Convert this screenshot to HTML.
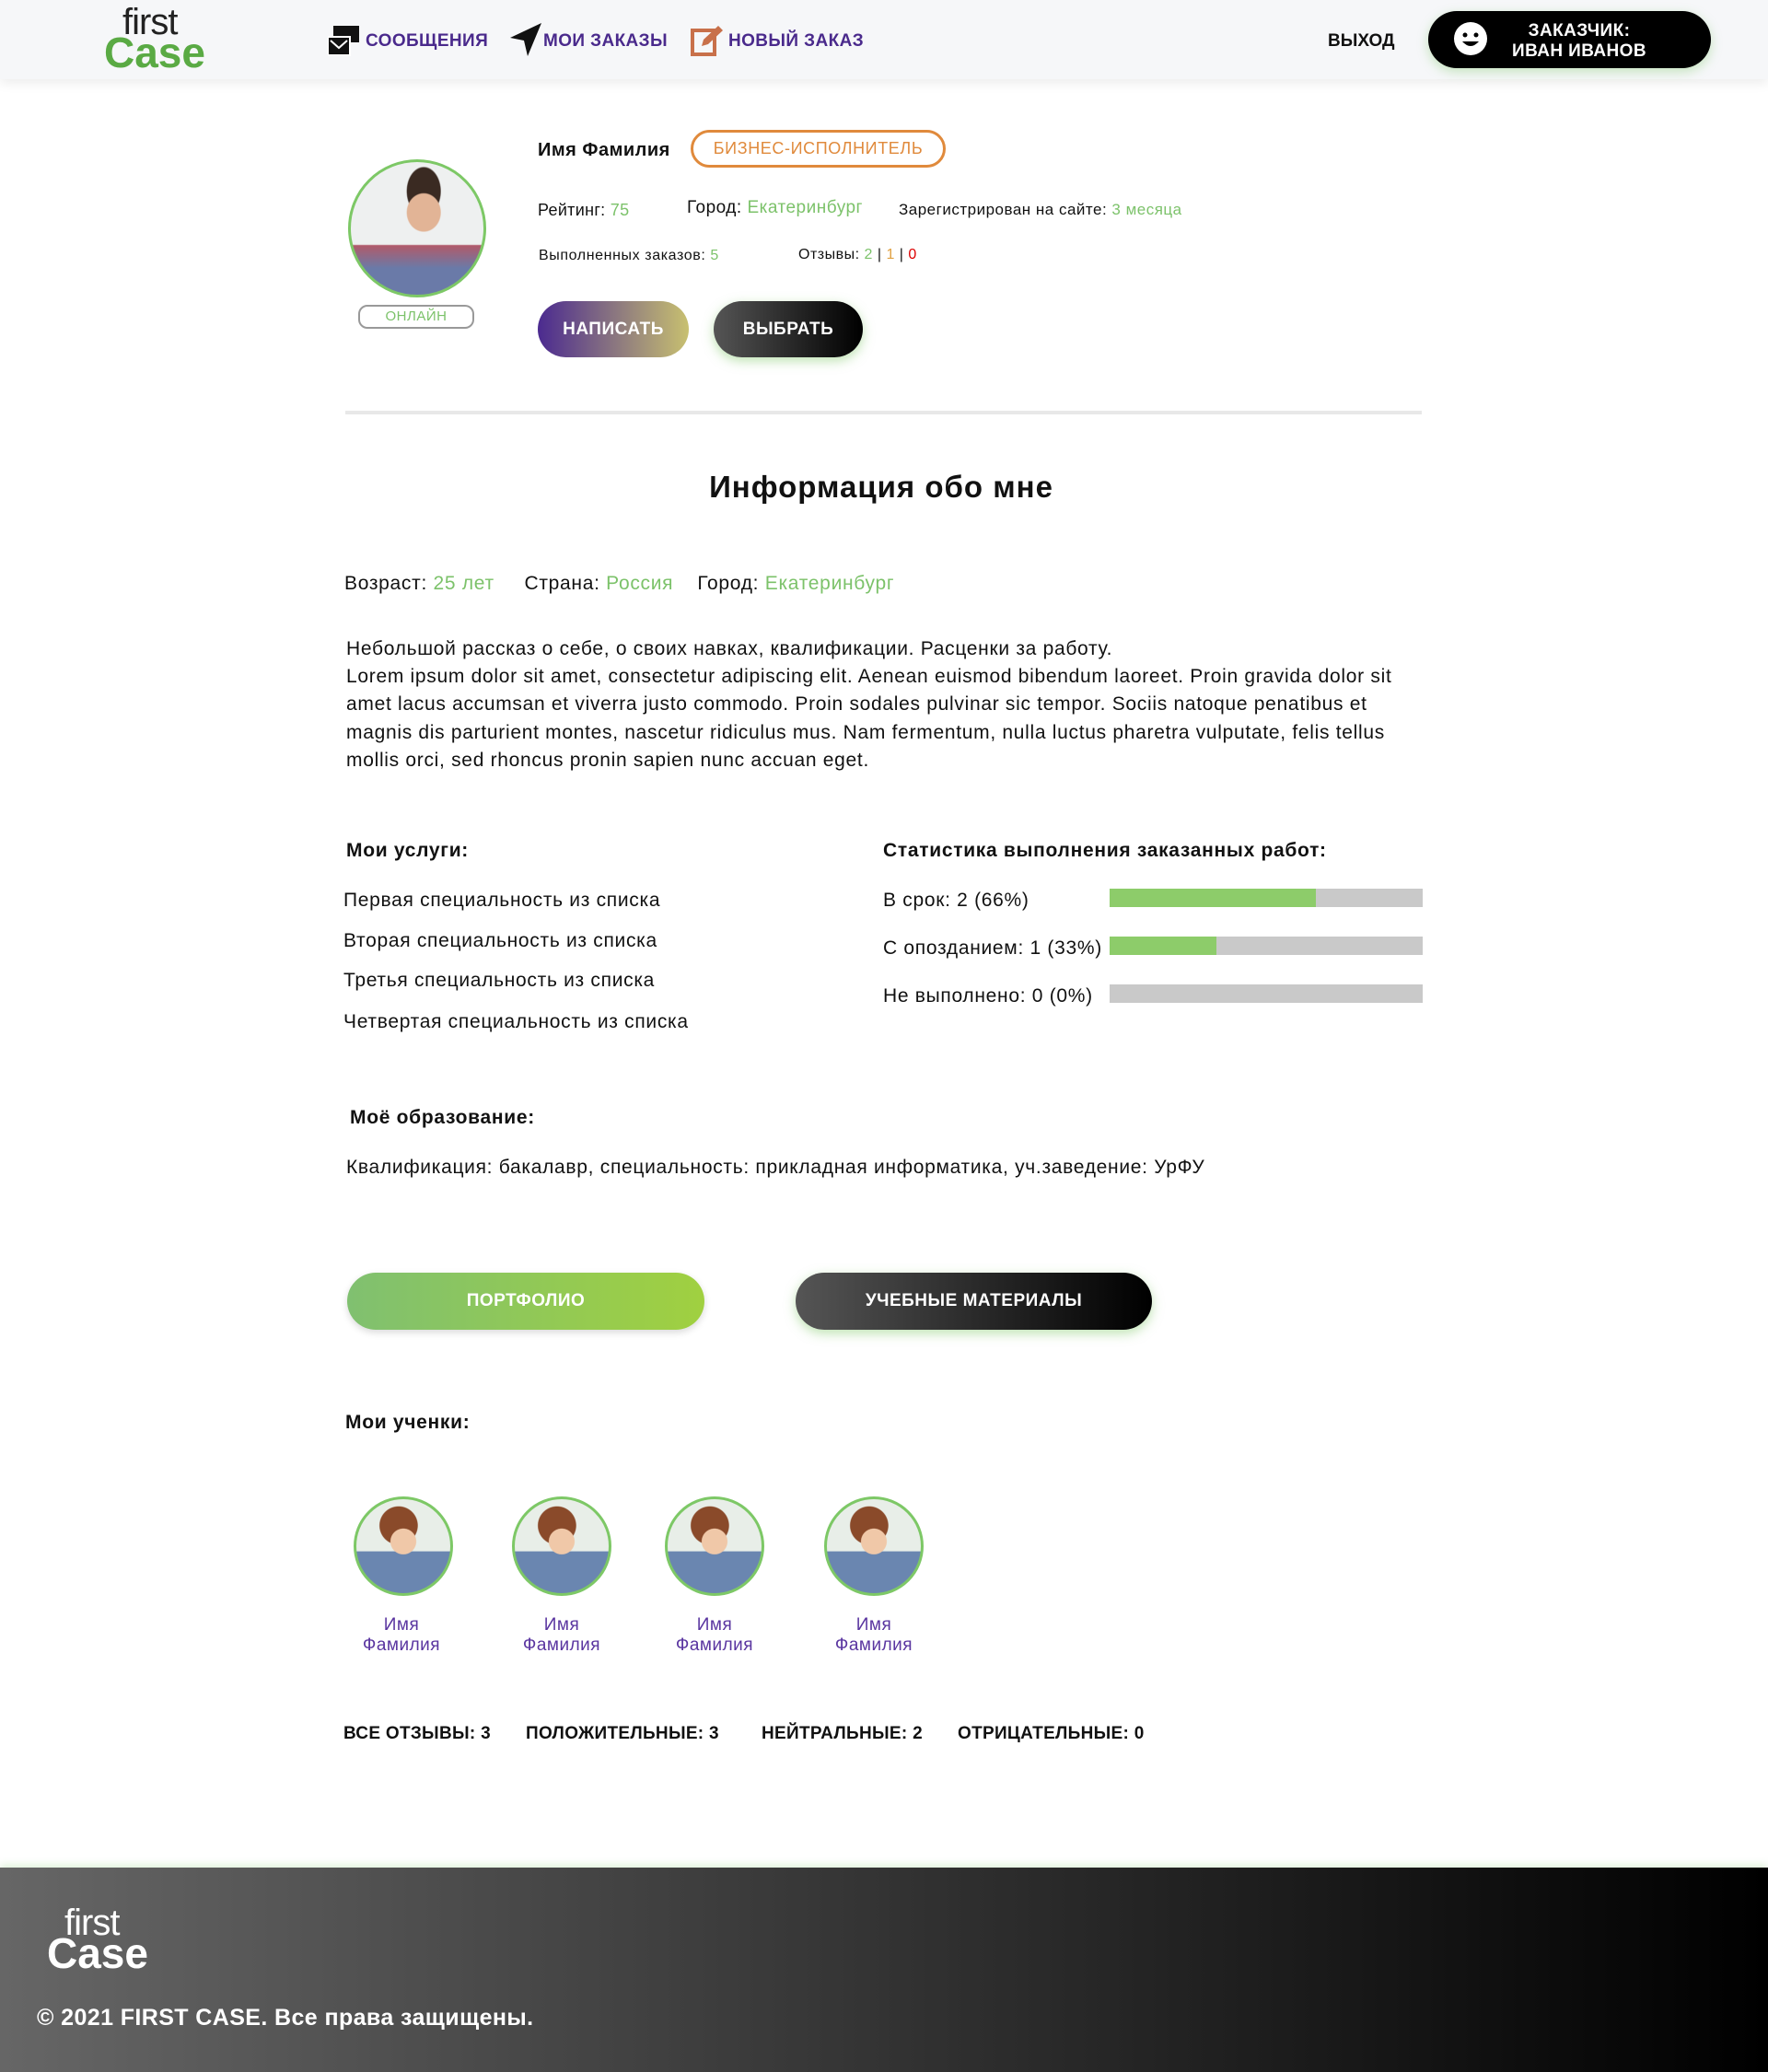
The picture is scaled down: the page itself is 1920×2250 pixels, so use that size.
<!DOCTYPE html>
<html><head><meta charset="utf-8"><style>
*{margin:0;padding:0;box-sizing:border-box}
body{width:1920px;height:2250px;position:relative;background:#fff;font-family:"Liberation Sans",sans-serif;color:#111;overflow:hidden}
.a{position:absolute;white-space:nowrap}
.g{color:#7cc26a}
.hdr{position:absolute;left:0;top:0;width:1920px;height:86px;background:#f6f7f9;box-shadow:0 4px 12px rgba(0,0,0,.08)}
.nav{font-size:19px;font-weight:bold;color:#4a2a8c;top:34px;letter-spacing:.4px}
.btn{position:absolute;border-radius:31px;color:#fff;font-weight:bold;display:flex;align-items:center;justify-content:center;font-size:19px;letter-spacing:.5px}
.bar{position:absolute;left:1205px;width:340px;height:20px;background:#c9c9c9}
.bar i{display:block;height:100%;background:#8dcc6a}
.av{position:absolute;width:108px;height:108px;border-radius:50%;border:3px solid #7dc866;background:radial-gradient(circle at 50% 45%,#f0c8a8 0 18%,transparent 19%),radial-gradient(circle at 45% 28%,#8a4a2a 0 22%,transparent 23%),linear-gradient(180deg,#e8eee8 0 55%,#6a86b0 56%)}
.nm{position:absolute;width:140px;text-align:center;font-size:19px;color:#5a35a0;line-height:22px;letter-spacing:.5px}
.txt{font-size:21px;letter-spacing:.7px}
</style></head><body>
<div class="hdr"></div>
<div class="a" style="left:133px;top:2px;font-size:40px;color:#222;letter-spacing:-1px">first</div>
<div class="a" style="left:113px;top:30px;font-size:46px;font-weight:bold;color:#5aaa44">Case</div>
<svg class="a" style="left:356px;top:28px" width="36" height="34" viewBox="0 0 36 34"><rect x="6" y="0" width="28" height="18" fill="#111"/><rect x="0" y="12" width="24" height="20" fill="#111" stroke="#fff" stroke-width="2"/><path d="M3 16 L12 24 L21 16" stroke="#fff" stroke-width="2" fill="none"/></svg>
<div class="a nav" style="left:397px">СООБЩЕНИЯ</div>
<svg class="a" style="left:553px;top:24px" width="36" height="38" viewBox="0 0 36 38"><path d="M35 1 L1 17 L16 20 L20 37 Z" fill="#111"/></svg>
<div class="a nav" style="left:590px">МОИ ЗАКАЗЫ</div>
<svg class="a" style="left:750px;top:26px" width="36" height="36" viewBox="0 0 36 36"><rect x="2" y="7" width="24" height="26" fill="none" stroke="#c8704a" stroke-width="4"/><path d="M12 24 L14 17 L30 2 L35 7 L19 22 Z" fill="#c8704a"/></svg>
<div class="a nav" style="left:791px">НОВЫЙ ЗАКАЗ</div>
<div class="a" style="left:1442px;top:34px;font-size:19px;font-weight:bold">ВЫХОД</div>
<div class="a" style="left:1551px;top:12px;width:307px;height:62px;border-radius:31px;background:#000;box-shadow:0 4px 12px rgba(125,200,102,.4)"></div>
<svg class="a" style="left:1578px;top:23px" width="38" height="38" viewBox="0 0 38 38"><circle cx="19" cy="19" r="18" fill="#fff"/><circle cx="13" cy="15" r="2.5"/><circle cx="25" cy="15" r="2.5"/><path d="M10 22 Q19 32 28 22 Z"/></svg>
<div class="a" style="left:1630px;top:23px;width:170px;text-align:center;color:#fff;font-weight:bold;font-size:19px;line-height:22px;letter-spacing:.4px">ЗАКАЗЧИК:<br>ИВАН ИВАНОВ</div>

<div class="a" style="left:378px;top:173px;width:150px;height:150px;border-radius:50%;border:3px solid #7dc866;background:radial-gradient(ellipse at 55% 38%,#e2b496 0 16%,transparent 17%),radial-gradient(ellipse at 55% 22%,#3a2a22 0 16%,transparent 17%),linear-gradient(180deg,#eef0f0 0 62%,#b05a6a 63%,#6a7aa8 80%)"></div>
<div class="a" style="left:389px;top:331px;width:126px;height:26px;border:2px solid #999;border-radius:10px;color:#7cc26a;font-size:15px;text-align:center;line-height:22px;letter-spacing:.5px">ОНЛАЙН</div>
<div class="a" style="left:584px;top:152px;font-size:20px;font-weight:bold;letter-spacing:.5px">Имя Фамилия</div>
<div class="a" style="left:750px;top:141px;width:277px;height:41px;border:3px solid #e08a3c;border-radius:21px;color:#e08a3c;font-size:18px;text-align:center;line-height:35px;letter-spacing:.6px">БИЗНЕС-ИСПОЛНИТЕЛЬ</div>
<div class="a" style="left:584px;top:218px;font-size:18px;letter-spacing:.3px">Рейтинг: <span class="g">75</span></div>
<div class="a" style="left:746px;top:215px;font-size:19px;letter-spacing:.5px">Город: <span class="g">Екатеринбург</span></div>
<div class="a" style="left:976px;top:218px;font-size:17px;letter-spacing:.5px">Зарегистрирован на сайте: <span class="g">3 месяца</span></div>
<div class="a" style="left:585px;top:269px;font-size:16px;letter-spacing:.6px">Выполненных заказов: <span class="g">5</span></div>
<div class="a" style="left:867px;top:268px;font-size:16px;letter-spacing:.5px">Отзывы: <span class="g">2</span> | <span style="color:#e0a040">1</span> | <span style="color:#d00">0</span></div>
<div class="btn" style="left:584px;top:327px;width:164px;height:61px;background:linear-gradient(90deg,#4b2a90,#c8c070)">НАПИСАТЬ</div>
<div class="btn" style="left:775px;top:327px;width:162px;height:61px;background:linear-gradient(90deg,#555,#000);box-shadow:0 4px 12px rgba(125,200,102,.5)">ВЫБРАТЬ</div>
<div class="a" style="left:375px;top:446px;width:1169px;height:4px;background:#e8e8e8"></div>
<div class="a" style="left:0;width:1914px;text-align:center;top:510px;font-size:33px;font-weight:bold;letter-spacing:1px">Информация обо мне</div>
<div class="a txt" style="left:374px;top:622px">Возраст: <span class="g">25 лет</span>&nbsp;&nbsp;&nbsp;&nbsp; Страна: <span class="g">Россия</span>&nbsp;&nbsp;&nbsp; Город: <span class="g">Екатеринбург</span></div>
<div class="a txt" style="left:376px;top:690px;width:1172px;white-space:normal;line-height:30.2px">Небольшой рассказ о себе, о своих навках, квалификации. Расценки за работу.<br>Lorem ipsum dolor sit amet, consectetur adipiscing elit. Aenean euismod bibendum laoreet. Proin gravida dolor sit amet lacus accumsan et viverra justo commodo. Proin sodales pulvinar sic tempor. Sociis natoque penatibus et magnis dis parturient montes, nascetur ridiculus mus. Nam fermentum, nulla luctus pharetra vulputate, felis tellus mollis orci, sed rhoncus pronin sapien nunc accuan eget.</div>
<div class="a txt" style="left:376px;top:912px;font-weight:bold">Мои услуги:</div>
<div class="a txt" style="left:373px;top:966px">Первая специальность из списка</div>
<div class="a txt" style="left:373px;top:1010px">Вторая специальность из списка</div>
<div class="a txt" style="left:373px;top:1053px">Третья специальность из списка</div>
<div class="a txt" style="left:373px;top:1098px">Четвертая специальность из списка</div>
<div class="a txt" style="left:959px;top:912px;font-weight:bold">Статистика выполнения заказанных работ:</div>
<div class="a txt" style="left:959px;top:966px">В срок: 2 (66%)</div>
<div class="a txt" style="left:959px;top:1018px">С опозданием: 1 (33%)</div>
<div class="a txt" style="left:959px;top:1070px">Не выполнено: 0 (0%)</div>
<div class="bar" style="top:965px"><i style="width:66%"></i></div>
<div class="bar" style="top:1017px"><i style="width:34%"></i></div>
<div class="bar" style="top:1069px"></div>
<div class="a txt" style="left:380px;top:1202px;font-weight:bold">Моё образование:</div>
<div class="a txt" style="left:376px;top:1256px">Квалификация: бакалавр, специальность: прикладная информатика, уч.заведение: УрФУ</div>
<div class="btn" style="left:377px;top:1382px;width:388px;height:62px;background:linear-gradient(90deg,#80c070,#a0d040);box-shadow:0 3px 8px rgba(0,0,0,.15)">ПОРТФОЛИО</div>
<div class="btn" style="left:864px;top:1382px;width:387px;height:62px;background:linear-gradient(90deg,#555,#000);box-shadow:0 4px 12px rgba(125,200,102,.5)">УЧЕБНЫЕ МАТЕРИАЛЫ</div>
<div class="a txt" style="left:375px;top:1533px;font-weight:bold">Мои ученки:</div>
<div class="av" style="left:384px;top:1625px"></div>
<div class="av" style="left:556px;top:1625px"></div>
<div class="av" style="left:722px;top:1625px"></div>
<div class="av" style="left:895px;top:1625px"></div>
<div class="nm" style="left:366px;top:1754px">Имя<br>Фамилия</div>
<div class="nm" style="left:540px;top:1754px">Имя<br>Фамилия</div>
<div class="nm" style="left:706px;top:1754px">Имя<br>Фамилия</div>
<div class="nm" style="left:879px;top:1754px">Имя<br>Фамилия</div>
<div class="a" style="left:373px;top:1872px;font-size:19px;font-weight:bold;letter-spacing:.3px">ВСЕ ОТЗЫВЫ: 3</div>
<div class="a" style="left:571px;top:1872px;font-size:19px;font-weight:bold;letter-spacing:.3px">ПОЛОЖИТЕЛЬНЫЕ: 3</div>
<div class="a" style="left:827px;top:1872px;font-size:19px;font-weight:bold;letter-spacing:.3px">НЕЙТРАЛЬНЫЕ: 2</div>
<div class="a" style="left:1040px;top:1872px;font-size:19px;font-weight:bold;letter-spacing:.3px">ОТРИЦАТЕЛЬНЫЕ: 0</div>
<div class="a" style="left:0;top:2028px;width:1920px;height:222px;background:linear-gradient(90deg,#666,#000);box-shadow:0 -3px 8px rgba(125,200,102,.25)"></div>
<div class="a" style="left:70px;top:2066px;font-size:40px;color:#fff;letter-spacing:-1px">first</div>
<div class="a" style="left:51px;top:2094px;font-size:46px;font-weight:bold;color:#fff">Case</div>
<div class="a" style="left:40px;top:2177px;font-size:25px;font-weight:bold;color:#fff;letter-spacing:.4px">© 2021 FIRST CASE. Все права защищены.</div>
</body></html>
